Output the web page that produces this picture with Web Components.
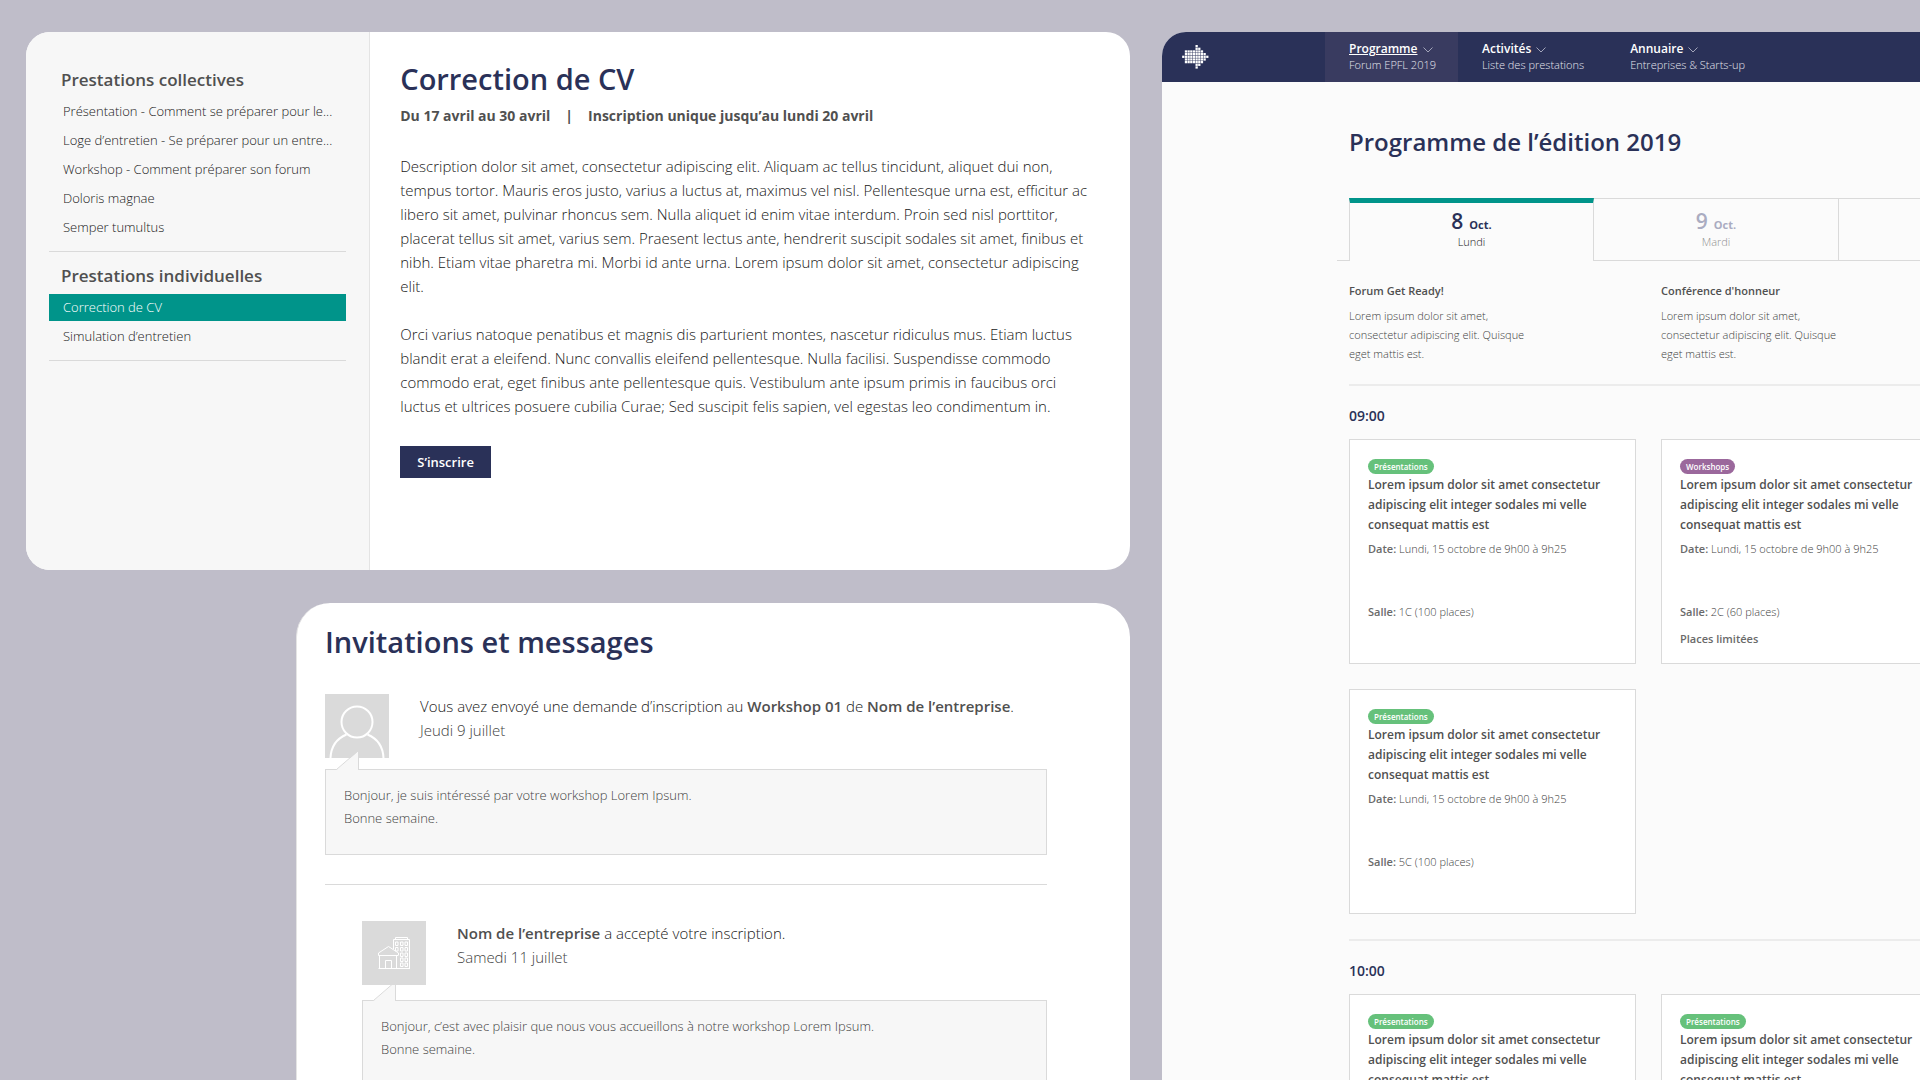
<!DOCTYPE html>
<html lang="fr">
<head>
<meta charset="utf-8">
<meta name="viewport" content="width=device-width, initial-scale=1">
<title>Forum EPFL</title>
<style>
  :root {
    --navy: #2a3158;
    --teal: #00948a;
    --green: #66c17b;
    --purple: #9b689c;
    --line: #dadada;
    --soft: #f7f7f7;
    --text: #505050;
    --body: #202020;
    --muted: #424242;
  }
  body {
    margin: 0;
    background: #bfbdc9;
    color: var(--text);
    font-family: "Open Sans", "Noto Sans", sans-serif;
    font-size: 15px;
  }
  b {
    color: var(--text);
    font-weight: 600;
  }
</style>
</head>
<body>
<forum-showcase>
  <service-panel slot="main">
    <menu-group slot="menu" label="Prestations collectives">
      <menu-link>Présentation - Comment se préparer pour le...</menu-link>
      <menu-link>Loge d’entretien - Se préparer pour un entre...</menu-link>
      <menu-link>Workshop - Comment préparer son forum</menu-link>
      <menu-link>Doloris magnae</menu-link>
      <menu-link>Semper tumultus</menu-link>
    </menu-group>
    <menu-group slot="menu" label="Prestations individuelles">
      <menu-link active>Correction de CV</menu-link>
      <menu-link>Simulation d’entretien</menu-link>
    </menu-group>
    <service-article heading="Correction de CV" dates="Du 17 avril au 30 avril" deadline="Inscription unique jusqu’au lundi 20 avril" action="S’inscrire">
      <p>Description dolor sit amet, consectetur adipiscing elit. Aliquam ac tellus tincidunt, aliquet dui non, tempus tortor. Mauris eros justo, varius a luctus at, maximus vel nisl. Pellentesque urna est, efficitur ac libero sit amet, pulvinar rhoncus sem. Nulla aliquet id enim vitae interdum. Proin sed nisl porttitor, placerat tellus sit amet, varius sem. Praesent lectus ante, hendrerit suscipit sodales sit amet, finibus et nibh. Etiam vitae pharetra mi. Morbi id ante urna. Lorem ipsum dolor sit amet, consectetur adipiscing elit.</p>
      <p>Orci varius natoque penatibus et magnis dis parturient montes, nascetur ridiculus mus. Etiam luctus blandit erat a eleifend. Nunc convallis eleifend pellentesque. Nulla facilisi. Suspendisse commodo commodo erat, eget finibus ante pellentesque quis. Vestibulum ante ipsum primis in faucibus orci luctus et ultrices posuere cubilia Curae; Sed suscipit felis sapien, vel egestas leo condimentum in.</p>
    </service-article>
  </service-panel>

  <message-panel slot="main" heading="Invitations et messages">
    <message-item icon="user" date="Jeudi 9 juillet">
      <span slot="title">Vous avez envoyé une demande d’inscription au <b>Workshop 01</b> de <b>Nom de l’entreprise</b>.</span>
      Bonjour, je suis intéressé par votre workshop Lorem Ipsum.<br>Bonne semaine.
    </message-item>
    <message-item icon="company" reply date="Samedi 11 juillet">
      <span slot="title"><b>Nom de l’entreprise</b> a accepté votre inscription.</span>
      Bonjour, c’est avec plaisir que nous vous accueillons à notre workshop Lorem Ipsum.<br>Bonne semaine.
    </message-item>
  </message-panel>

  <program-panel slot="side" heading="Programme de l’édition 2019">
    <nav-item slot="nav" label="Programme" hint="Forum EPFL 2019" active></nav-item>
    <nav-item slot="nav" label="Activités" hint="Liste des prestations"></nav-item>
    <nav-item slot="nav" label="Annuaire" hint="Entreprises &amp; Starts-up"></nav-item>
    <day-tab slot="days" day="8" month="Oct." name="Lundi" active></day-tab>
    <day-tab slot="days" day="9" month="Oct." name="Mardi"></day-tab>
    <info-note slot="notes" heading="Forum Get Ready!">Lorem ipsum dolor sit amet, consectetur adipiscing elit. Quisque eget mattis est.</info-note>
    <info-note slot="notes" heading="Conférence d'honneur">Lorem ipsum dolor sit amet, consectetur adipiscing elit. Quisque eget mattis est.</info-note>
    <time-slot time="09:00">
      <event-card tag="Présentations" room="1C (100 places)"></event-card>
      <event-card tag="Workshops" room="2C (60 places)" note="Places limitées"></event-card>
      <event-card tag="Présentations" room="5C (100 places)"></event-card>
    </time-slot>
    <time-slot time="10:00">
      <event-card tag="Présentations"></event-card>
      <event-card tag="Présentations"></event-card>
    </time-slot>
  </program-panel>
</forum-showcase>

<script>
class BaseElement extends HTMLElement {
  constructor() {
    super();
    this.attachShadow({ mode: "open" });
  }

  connectedCallback() {
    this.shadowRoot.innerHTML = this.render();
  }

  attr(name) {
    return this.getAttribute(name) || "";
  }
}

class ForumShowcase extends BaseElement {
  render() {
    return `
      <style>
        :host {
          display: grid;
          grid-template-columns: minmax(0, 1104fr) minmax(0, 758fr);
          gap: 32px;
          box-sizing: border-box;
          height: 100vh;
          padding: 32px 0 0 26px;
          overflow: hidden;
        }
        .main {
          display: flex;
          flex-direction: column;
          gap: 33px;
          min-height: 0;
        }
      </style>
      <div class="main"><slot name="main"></slot></div>
      <slot name="side"></slot>
    `;
  }
}

class ServicePanel extends BaseElement {
  render() {
    return `
      <style>
        :host {
          display: flex;
          flex: none;
          min-height: 538px;
          border-radius: 24px;
          background: #fff;
          overflow: hidden;
        }
        nav {
          box-sizing: border-box;
          flex: 0 0 344px;
          padding: 24px 23px;
          background: var(--soft);
          border-right: 1px solid #e4e4e4;
        }
      </style>
      <nav><slot name="menu"></slot></nav>
      <slot></slot>
    `;
  }
}

class MenuGroup extends BaseElement {
  render() {
    return `
      <style>
        :host {
          display: block;
          padding-bottom: 10px;
          border-bottom: 1px solid var(--line);
        }
        h2 {
          margin: 0;
          padding: 9px 12px 3px;
          font-size: 17px;
          line-height: 30px;
          font-weight: 600;
        }
        div {
          display: flex;
          flex-direction: column;
          gap: 2px;
        }
      </style>
      <h2>${this.attr("label")}</h2>
      <div><slot></slot></div>
    `;
  }
}

class MenuLink extends BaseElement {
  render() {
    return `
      <style>
        a {
          display: block;
          padding: 0 14px;
          color: var(--body);
          font-size: 13px;
          line-height: 27px;
          font-weight: 300;
          text-decoration: none;
          white-space: nowrap;
        }
        :host([active]) a {
          background: var(--teal);
          color: #fff;
        }
      </style>
      <a href="#"><slot></slot></a>
    `;
  }
}

class ServiceArticle extends BaseElement {
  render() {
    return `
      <style>
        :host {
          display: block;
          flex: 1;
          padding: 27px 40px 32px 30px;
        }
        h1 {
          margin: 0;
          color: var(--navy);
          font-size: 29px;
          line-height: 40px;
          font-weight: 600;
        }
        .dates {
          display: flex;
          gap: 15px;
          margin: 5px 0 26px;
          font-size: 14px;
          line-height: 24px;
          font-weight: 700;
        }
        ::slotted(p) {
          margin: 0 0 24px;
          color: var(--body);
          line-height: 24px;
          font-weight: 300;
        }
        button {
          display: block;
          margin-top: 28px;
          padding: 0 17px;
          border: 0;
          background: var(--navy);
          color: #fff;
          font: 600 13px/32px "Open Sans", "Noto Sans", sans-serif;
        }
      </style>
      <h1>${this.attr("heading")}</h1>
      <div class="dates">
        <span>${this.attr("dates")}</span>
        <span>|</span>
        <span>${this.attr("deadline")}</span>
      </div>
      <slot></slot>
      <button type="button">${this.attr("action")}</button>
    `;
  }
}

class MessagePanel extends BaseElement {
  render() {
    return `
      <style>
        :host {
          display: block;
          flex: none;
          margin-left: 270px;
          padding: 19px 83px 40px 28px;
          border-left: 1px solid #e4e4e4;
          border-radius: 34px 34px 0 0;
          background: #fff;
        }
        h1 {
          margin: 0 0 32px;
          color: var(--navy);
          font-size: 29px;
          line-height: 40px;
          font-weight: 600;
        }
      </style>
      <h1>${this.attr("heading")}</h1>
      <slot></slot>
    `;
  }
}

const avatars = {
  user: `
    <circle cx="32" cy="28" r="15.5"/>
    <path d="M5.5 64C6 53 12 44.500 21.500 40.500M42.500 40.500C52 44.500 58 53 58.500 64"/>`,
  company: `
    <g stroke-width="1">
      <path d="M16.500 47.500H48M17.500 47V35M34.500 47V35M16.500 34.500H36M16.500 34.500V32L26.500 25.500L36.500 32V34.500M23.500 47V39.500H29.500V47"/>
      <path d="M31.500 28V18.500H47.500V47.500M33.500 18V16.500H45.500V18"/>
      <path d="M33.500 21h2.500v3.500h-2.500zM38.500 21h2.500v3.500h-2.500zM43 21h2.500v3.500h-2.500zM33.500 26.500h2.500v3.500h-2.500zM38.500 26.500h2.500v3.500h-2.500zM43 26.500h2.500v3.500h-2.500zM38.500 32h2.500v3.500h-2.500zM43 32h2.500v3.500h-2.500zM38.500 37h2.500v3.500h-2.500zM43 37h2.500v3.500h-2.500zM38.500 42h2.500v3.500h-2.500zM43 42h2.500v3.500h-2.500z"/>
    </g>`
};

class MessageItem extends BaseElement {
  render() {
    return `
      <style>
        :host {
          display: block;
          font-weight: 300;
        }
        :host(:not(:last-child)) {
          margin-bottom: 36px;
          padding-bottom: 29px;
          border-bottom: 1px solid var(--line);
        }
        :host([reply]) {
          margin-left: 37px;
        }
        .head {
          display: flex;
          gap: 31px;
          margin-bottom: 11px;
        }
        :host([reply]) .head {
          margin-bottom: 15px;
        }
        .avatar {
          flex: none;
          background: #dadada;
        }
        :host([reply]) .avatar {
          position: relative;
          z-index: 1;
        }
        .meta {
          color: var(--body);
          line-height: 24px;
        }
        .date {
          color: var(--muted);
        }
        .bubble {
          position: relative;
          min-height: 62px;
          padding: 14px 18px 8px;
          border: 1px solid var(--line);
          background: var(--soft);
          color: var(--muted);
          font-size: 13px;
          line-height: 23px;
        }
        .tail {
          position: absolute;
          left: 10px;
          top: -20px;
        }
      </style>
      <div class="head">
        <svg class="avatar" width="64" height="64" viewBox="0 0 64 64" fill="none" stroke="#fff" stroke-width="2" aria-hidden="true">${avatars[this.attr("icon")]}</svg>
        <div class="meta">
          <div><slot name="title"></slot></div>
          <div class="date">${this.attr("date")}</div>
        </div>
      </div>
      <div class="bubble">
        <svg class="tail" width="24" height="21" viewBox="0 0 24 21" aria-hidden="true">
          <path d="M0 20V21H23V0.500L1 19.500Z" fill="#f7f7f7"/>
          <path d="M0.500 19.500L22.500 0.500V20" fill="none" stroke="#dadada"/>
        </svg>
        <slot></slot>
      </div>
    `;
  }
}

class ProgramPanel extends BaseElement {
  render() {
    // One entry per logo row: [first cell, number of cells]
    const rows = [[5, 1], [5, 2], [1, 7], [1, 8], [0, 10], [1, 8], [1, 7], [5, 2], [5, 1]];
    const dots = rows.map(([start, count], y) =>
      Array.from({ length: count }, (_, i) =>
        `<rect x="${start + i}" y="${y}" width="0.85" height="0.85"/>`).join("")).join("");
    return `
      <style>
        :host {
          display: block;
          min-width: 0;
          border-radius: 24px 0 0 0;
          background: #fbfbfb;
          overflow: hidden;
        }
        header {
          display: flex;
          height: 50px;
          background: var(--navy);
        }
        .logo {
          flex: 0 0 143px;
          padding: 13px 0 0 20px;
        }
        main {
          padding: 40px 0 0 187px;
        }
        h1 {
          margin: 0 0 36px;
          color: var(--navy);
          font-size: 24px;
          line-height: 40px;
          font-weight: 600;
        }
        .days {
          display: flex;
          margin-left: -12px;
        }
        .days::before {
          content: "";
          flex: 0 0 12px;
          border-bottom: 1px solid var(--line);
        }
        .days::after {
          content: "";
          flex: 1;
          border: 1px solid var(--line);
          border-width: 1px 0;
        }
        .notes {
          display: grid;
          grid-template-columns: repeat(2, 287px);
          gap: 25px;
          padding: 20px 0 21px;
        }
      </style>
      <header>
        <a class="logo" href="#" aria-label="Forum EPFL">
          <svg width="27" height="24" viewBox="0 0 10 9" fill="#fff" aria-hidden="true">${dots}</svg>
        </a>
        <slot name="nav"></slot>
      </header>
      <main>
        <h1>${this.attr("heading")}</h1>
        <div class="days"><slot name="days"></slot></div>
        <div class="notes"><slot name="notes"></slot></div>
        <slot></slot>
      </main>
    `;
  }
}

class NavItem extends BaseElement {
  render() {
    return `
      <style>
        a {
          display: block;
          box-sizing: border-box;
          height: 100%;
          padding: 9px 22px 0 24px;
          color: #fff;
          font-size: 12px;
          line-height: 16px;
          font-weight: 600;
          text-decoration: none;
          white-space: nowrap;
        }
        :host([active]) a {
          background: #393b60;
        }
        :host([active]) b {
          text-decoration: underline;
        }
        b {
          font-weight: 600;
        }
        svg {
          margin-left: 2px;
          vertical-align: -1px;
        }
        small {
          display: block;
          color: #e4e5ee;
          font-size: 11px;
          line-height: 15px;
          font-weight: 300;
        }
      </style>
      <a href="#">
        <b>${this.attr("label")}</b>
        <svg width="10" height="8" viewBox="0 0 10 8" fill="none" stroke="#a3a5ba" aria-hidden="true"><path d="M0.500 1.500L5 6L9.500 1.500"/></svg>
        <small>${this.attr("hint")}</small>
      </a>
    `;
  }
}

class DayTab extends BaseElement {
  render() {
    return `
      <style>
        :host {
          flex: 0 0 245px;
        }
        button {
          display: flex;
          flex-direction: column;
          align-items: center;
          box-sizing: border-box;
          width: 100%;
          height: 63px;
          padding: 11px 0 0;
          border: 1px solid var(--line);
          border-left: 0;
          background: none;
          color: #909090;
          font: 300 11px/12px "Open Sans", "Noto Sans", sans-serif;
        }
        .date {
          display: flex;
          align-items: baseline;
          gap: 6px;
          color: #aaacc1;
          line-height: 22px;
          font-weight: 700;
        }
        .date b {
          font-size: 21px;
          font-weight: 600;
        }
        :host([active]) button {
          padding-top: 7px;
          border: 1px solid var(--line);
          border-top: 5px solid var(--teal);
          border-bottom: 0;
          color: var(--body);
        }
        :host([active]) .date {
          color: var(--navy);
        }
      </style>
      <button type="button">
        <span class="date"><b>${this.attr("day")}</b> ${this.attr("month")}</span>
        <span>${this.attr("name")}</span>
      </button>
    `;
  }
}

class InfoNote extends BaseElement {
  render() {
    return `
      <style>
        h2 {
          margin: 0 0 5px;
          font-size: 11px;
          line-height: 20px;
          font-weight: 600;
        }
        p {
          max-width: 180px;
          margin: 0;
          color: var(--muted);
          font-size: 11px;
          line-height: 19px;
          font-weight: 300;
        }
      </style>
      <h2>${this.attr("heading")}</h2>
      <p><slot></slot></p>
    `;
  }
}

class TimeSlot extends BaseElement {
  render() {
    return `
      <style>
        :host {
          display: block;
          margin-bottom: 25px;
          border-top: 2px solid #ececec;
        }
        h2 {
          margin: 0;
          padding: 20px 0 13px;
          color: var(--navy);
          font-size: 14px;
          line-height: 20px;
          font-weight: 600;
        }
        div {
          display: grid;
          grid-template-columns: repeat(2, 287px);
          gap: 25px;
        }
      </style>
      <h2>${this.attr("time")}</h2>
      <div><slot></slot></div>
    `;
  }
}

class EventCard extends BaseElement {
  render() {
    const room = this.attr("room");
    const note = this.attr("note");
    const color = this.attr("tag") === "Workshops" ? "purple" : "green";
    return `
      <style>
        :host {
          display: flex;
          flex-direction: column;
          align-items: flex-start;
          box-sizing: border-box;
          min-height: 225px;
          padding: 19px 18px 14px;
          border: 1px solid var(--line);
          background: #fff;
          color: var(--muted);
          font-size: 11px;
          line-height: 20px;
          font-weight: 300;
        }
        .tag {
          padding: 0 6px;
          border-radius: 8px;
          background: var(--${color});
          color: #fff;
          font-size: 8px;
          line-height: 15px;
          font-weight: 600;
        }
        h3 {
          margin: 1px 0 4px;
          color: var(--text);
          font-size: 12px;
          line-height: 20px;
          font-weight: 600;
        }
        b,
        .note {
          color: #6a6a6a;
          font-weight: 600;
        }
        .room {
          margin-top: 43px;
        }
        .note {
          margin-top: 7px;
        }
      </style>
      <span class="tag">${this.attr("tag")}</span>
      <h3>Lorem ipsum dolor sit amet consectetur adipiscing elit integer sodales mi velle consequat mattis est</h3>
      ${room ? `<div><b>Date:</b> Lundi, 15 octobre de 9h00 à 9h25</div>
      <div class="room"><b>Salle:</b> ${room}</div>` : ""}
      ${note ? `<div class="note">${note}</div>` : ""}
    `;
  }
}

customElements.define("forum-showcase", ForumShowcase);
customElements.define("service-panel", ServicePanel);
customElements.define("menu-group", MenuGroup);
customElements.define("menu-link", MenuLink);
customElements.define("service-article", ServiceArticle);
customElements.define("message-panel", MessagePanel);
customElements.define("message-item", MessageItem);
customElements.define("program-panel", ProgramPanel);
customElements.define("nav-item", NavItem);
customElements.define("day-tab", DayTab);
customElements.define("info-note", InfoNote);
customElements.define("time-slot", TimeSlot);
customElements.define("event-card", EventCard);
</script>
</body>
</html>
